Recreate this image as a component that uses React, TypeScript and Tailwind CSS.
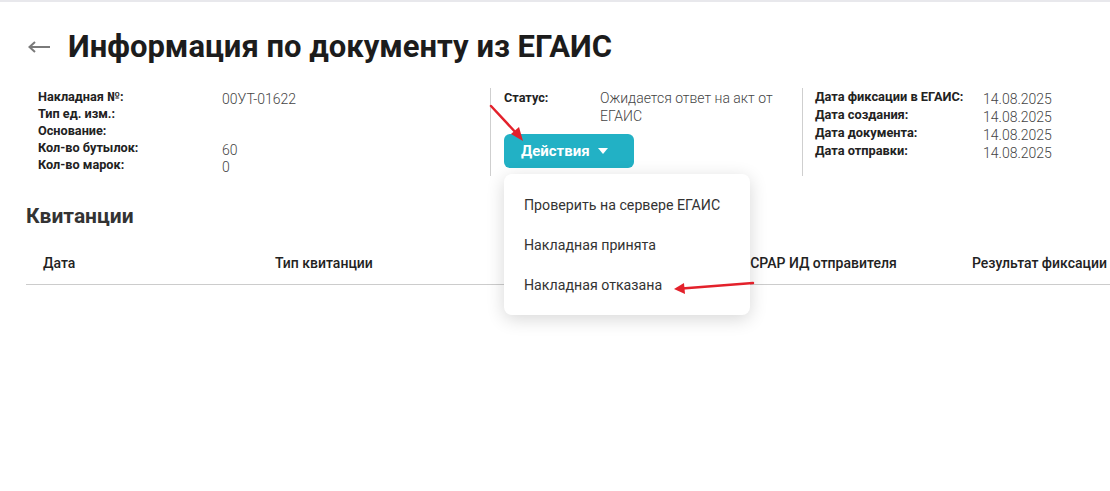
import React from 'react';

const infoLeft = [
  { label: 'Накладная №:', value: '00УТ-01622' },
  { label: 'Тип ед. изм.:', value: '' },
  { label: 'Основание:', value: '' },
  { label: 'Кол-во бутылок:', value: '60' },
  { label: 'Кол-во марок:', value: '0' },
];

const infoDates = [
  { label: 'Дата фиксации в ЕГАИС:', value: '14.08.2025' },
  { label: 'Дата создания:', value: '14.08.2025' },
  { label: 'Дата документа:', value: '14.08.2025' },
  { label: 'Дата отправки:', value: '14.08.2025' },
];

const columns = ['Дата', 'Тип квитанции', 'Номер квитанции', 'ФСРАР ИД отправителя', 'Результат фиксации'];

const menuItems = ['Проверить на сервере ЕГАИС', 'Накладная принята', 'Накладная отказана'];

function RedArrows() {
  return (
    <svg className="pointer-events-none absolute left-0 top-0 z-30" width="1110" height="491">
      <g stroke="#e3212b" strokeWidth="2.5" strokeLinecap="round" fill="none">
        <line x1="491" y1="104" x2="518" y2="133" />
        <line x1="753" y1="281" x2="682" y2="286.5" />
      </g>
      <polygon points="523,139 511,132 519,125" fill="#e3212b" />
      <polygon points="674,287 684,281 685,292" fill="#e3212b" />
    </svg>
  );
}

export default function App() {
  return (
    <div
      className="relative h-[491px] w-[1110px] overflow-hidden border-t-2 border-[#e8e8ec] bg-white"
      style={{ fontFamily: 'Roboto, "Liberation Sans", sans-serif' }}
    >
      <div className="pl-[26px]">
        <div className="flex items-center pt-[27px]">
          <span className="ml-[2px] flex w-[40px] items-center">
            <svg width="22" height="12" viewBox="0 0 22 12">
              <line x1="2" y1="6" x2="22" y2="6" stroke="#7a7a7a" strokeWidth="2" />
              <polyline points="7,1 1.5,6 7,11" fill="none" stroke="#7a7a7a" strokeWidth="2" />
            </svg>
          </span>
          <h1 className="text-[31px] font-bold leading-[36px] text-[#1c1c1c]">
            Информация по документу из ЕГАИС
          </h1>
        </div>

        <div className="mt-[23px] flex">
          <div className="w-[465px] border-r border-[#cfcfcf] pl-[12px]">
            {infoLeft.map((row) => (
              <div key={row.label} className="flex h-[17px] items-center">
                <span className="w-[184px] text-[12.7px] font-bold text-[#222]">{row.label}</span>
                <span className="mt-[5px] text-[14px] font-light text-[#444]">{row.value}</span>
              </div>
            ))}
            <div className="h-[3px]" />
          </div>

          <div className="w-[312px] border-r border-[#cfcfcf] pl-[13px]">
            <div className="flex">
              <span className="w-[96px] pt-[1px] text-[12.7px] font-bold leading-[17px] text-[#222]">Статус:</span>
              <span className="w-[195px] pt-[1px] text-[14px] font-light leading-[18px] text-[#444]">
                Ожидается ответ на акт от ЕГАИС
              </span>
            </div>
            <div className="relative mt-[9px]">
              <button className="flex h-[34px] w-[130px] items-center rounded-md bg-[#22b1c5] pl-[17px] text-[15px] font-bold text-white">
                Действия
                <svg width="10" height="6" viewBox="0 0 10 6" className="ml-[8px]">
                  <polygon points="0,0 10,0 5,6" fill="#ffffff" />
                </svg>
              </button>
              <div className="absolute left-0 top-[40px] z-20 w-[246px] rounded-lg bg-white pb-[9px] pt-[12px] shadow-[0_4px_18px_rgba(0,0,0,0.16)]">
                {menuItems.map((item) => (
                  <div key={item} className="flex h-[40px] items-center pl-[20px] text-[14.2px] text-[#333]">
                    {item}
                  </div>
                ))}
              </div>
            </div>
            <div className="h-[8px]" />
          </div>

          <div className="pl-[12px]">
            {infoDates.map((row) => (
              <div key={row.label} className="flex h-[18px] items-center">
                <span className="w-[168px] text-[12.8px] font-bold text-[#222]">{row.label}</span>
                <span className="mt-[4px] text-[14px] font-light text-[#444]">{row.value}</span>
              </div>
            ))}
          </div>
        </div>

        <h2 className="mt-[26px] text-[21px] font-bold leading-[28px] text-[#333]">Квитанции</h2>

        <div className="grid grid-cols-[232px_232px_232px_233px_1fr] border-b border-[#cccccc] pb-[12px] pl-[17px] pt-[24px]">
          {columns.map((c) => (
            <span key={c} className="whitespace-nowrap text-[14px] font-medium leading-[18px] text-[#222]">
              {c}
            </span>
          ))}
        </div>
      </div>

      <RedArrows />
    </div>
  );
}
